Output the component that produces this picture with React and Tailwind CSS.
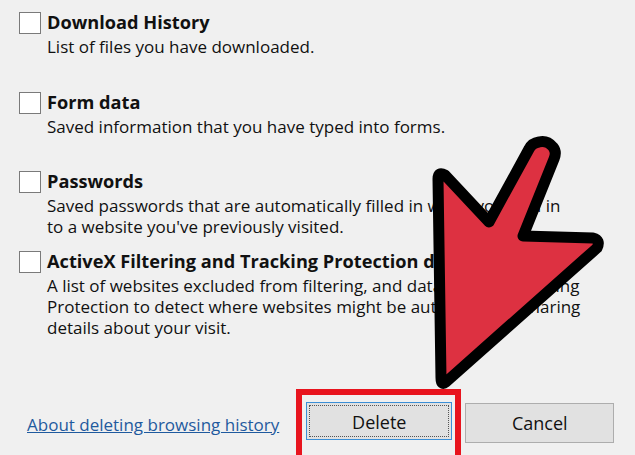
import React from 'react';

const items = [
  {
    title: 'Download History',
    desc: ['List of files you have downloaded.'],
  },
  {
    title: 'Form data',
    desc: ['Saved information that you have typed into forms.'],
  },
  {
    title: 'Passwords',
    desc: [
      'Saved passwords that are automatically filled in when you sign in',
      "to a website you've previously visited.",
    ],
  },
  {
    title: 'ActiveX Filtering and Tracking Protection data',
    desc: [
      'A list of websites excluded from filtering, and data used by Tracking',
      'Protection to detect where websites might be automatically sharing',
      'details about your visit.',
    ],
  },
];

function Arrow() {
  return (
    <svg
      className="absolute left-0 top-0 pointer-events-none"
      width="635"
      height="455"
      viewBox="0 0 635 455"
    >
      <path
        d="M539 142 Q547 140 553 147 Q557 152 554 159 L523 236 L593 238 Q601 240 597 248 L446 382 Q441 386 441 378 L438 179 Q438 171 445 175 L489 222 L529 149 Q532 143 539 142 Z"
        fill="#dd3141"
        stroke="#000"
        strokeWidth="11"
        strokeLinejoin="round"
      />
    </svg>
  );
}

export default function App() {
  return (
    <div
      className="relative w-[635px] h-[455px] overflow-hidden bg-[#f0f0f0] text-[#111] flex flex-col"
      style={{ fontFamily: '"Open Sans", "Noto Sans", sans-serif' }}
    >
      <div className="pl-[19px] pt-[11px]">
        {items.map((item) => (
          <div key={item.title} className="flex h-[79.5px]">
            <div className="mt-[1px] w-[22px] h-[22px] border border-[#7a7a7a] bg-white shrink-0" />
            <div className="ml-[6px] whitespace-nowrap">
              <div className="font-bold text-[18.2px] leading-[22px]">{item.title}</div>
              <div className="mt-[3px] text-[17px] leading-[21px]">
                {item.desc.map((line) => (
                  <div key={line}>{line}</div>
                ))}
              </div>
            </div>
          </div>
        ))}
      </div>

      <div className="mt-auto flex items-start pl-[27px] h-[66px]">
        <a href="#" className="mt-[25px] text-[17px] leading-[22px] text-[#1f5a9e] underline whitespace-nowrap">
          About deleting browsing history
        </a>
        <div className="ml-[17px] w-[165px] h-[80px] border-[6px] border-[#e8141e] pt-[7px] pl-[4px]">
          <button className="w-[146px] h-[38px] border border-[#3c8fd6] bg-[#e1e1e1] p-[2px]">
            <div className="w-full h-full border border-dotted border-[#555] flex items-center justify-center text-[18px] pt-[2px]">
              Delete
            </div>
          </button>
        </div>
        <button className="ml-[4px] mt-[14px] w-[149px] h-[40px] border border-[#adadad] bg-[#e1e1e1] text-[18px]">
          Cancel
        </button>
      </div>

      <Arrow />
    </div>
  );
}
